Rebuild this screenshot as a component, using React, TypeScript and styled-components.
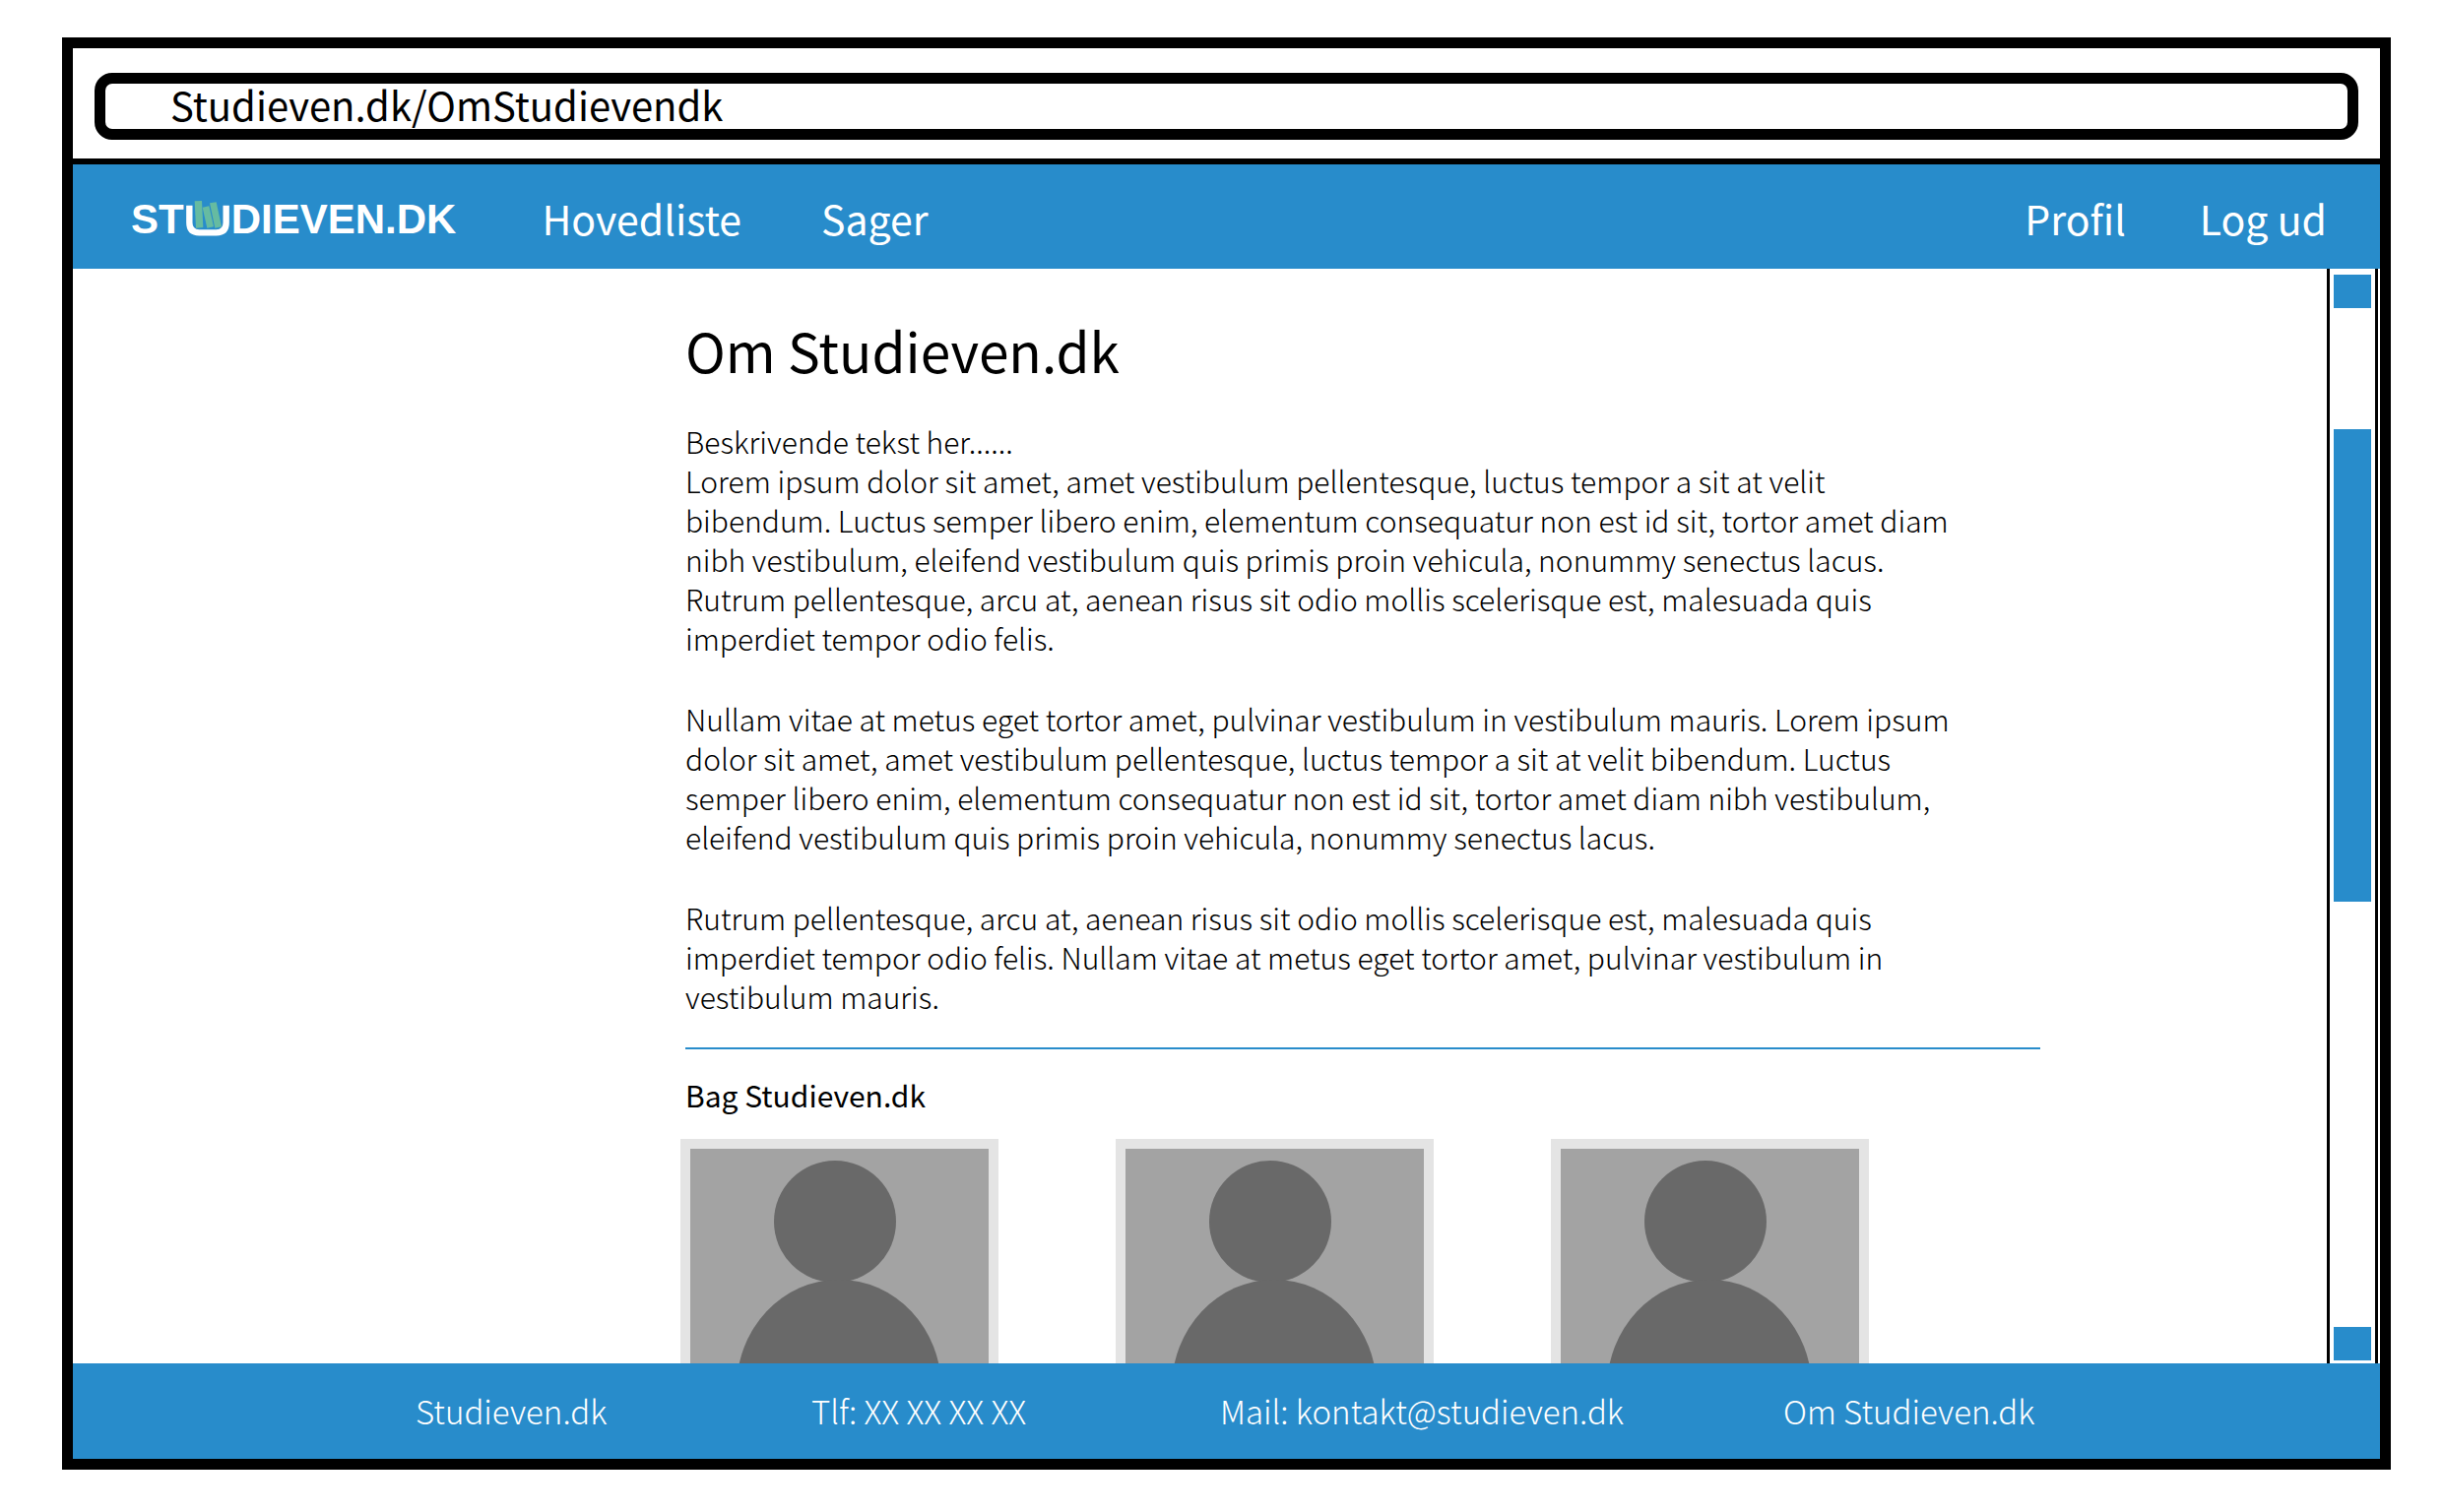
import React from "react";
import styled, { createGlobalStyle } from "styled-components";

const BLUE = "#288ccb";
const SANS = `"Noto Sans CJK JP", "Noto Sans CJK SC", "Open Sans", sans-serif`;

const GlobalStyle = createGlobalStyle`
  * { box-sizing: border-box; }
  html, body, #root { height: 100%; }
  body { margin: 0; background: #fff; color: #000; font-family: ${SANS}; }
  h1, h2, p, ul { margin: 0; padding: 0; font-weight: inherit; }
  a { color: inherit; text-decoration: none; }
`;

const Page = styled.div`
  height: 100vh;
  padding: 38px 53px 43px 63px;
`;

const BrowserWindow = styled.div`
  display: flex;
  flex-direction: column;
  height: 100%;
  border: 11px solid #000;
`;

const AddressRow = styled.div`
  flex: none;
  padding: 25px 22px 19px;
  border-bottom: 6px solid #000;
`;

const AddressInput = styled.input`
  display: block;
  width: 100%;
  height: 68px;
  padding: 0 66px 4px;
  border: 11px solid #000;
  border-radius: 18px;
  outline: none;
  background: #fff;
  color: #000;
  font: 400 40px/46px ${SANS};
`;

const Header = styled.header`
  flex: none;
  display: flex;
  align-items: center;
  justify-content: space-between;
  height: 106px;
  padding: 2px 54px 0 59px;
  background: ${BLUE};
  color: #fff;
`;

const HeaderGroup = styled.nav<{ $gap: number }>`
  display: flex;
  align-items: center;
  gap: ${(p) => p.$gap}px;
`;

const NavLink = styled.a`
  font-size: 41px;
  line-height: 60px;
`;

const Logo = styled.a`
  display: flex;
  align-items: center;
  margin-right: 6px;
  padding-top: 4px;
  font: 700 42px/48px "Liberation Sans", Arial, sans-serif;
`;

const LogoCup = styled.svg`
  width: 48px;
  height: 48px;
`;

const Viewport = styled.div`
  flex: 1;
  min-height: 0;
  display: flex;
  padding-right: 2px;
`;

const Scroller = styled.main`
  flex: 1;
  min-width: 0;
  overflow: hidden;
  padding-left: 622px;
`;

const Article = styled.article`
  max-width: 1376px;
`;

const Title = styled.h1`
  padding-top: 42px;
  font-size: 55px;
  line-height: 80px;
`;

const Copy = styled.div`
  display: flex;
  flex-direction: column;
  gap: 42px;
  max-width: 1304px;
  padding-top: 33px;
  font-size: 30px;
  line-height: 40px;
  font-weight: 300;
`;

const Rule = styled.hr`
  height: 2px;
  margin: 32px 0 0;
  border: 0;
  background: ${BLUE};
`;

const Subtitle = styled.h2`
  padding-top: 26px;
  font-size: 30px;
  line-height: 40px;
`;

const People = styled.ul`
  display: flex;
  gap: 119px;
  margin: 25px 0 0 -5px;
  list-style: none;
`;

const Portrait = styled.li`
  flex: none;
  width: 323px;
  border: 10px solid #e4e4e4;
  background: #a3a3a3;
`;

const Silhouette = styled.svg`
  display: block;
  width: 100%;
  fill: #696969;
`;

const ScrollTrack = styled.div`
  flex: none;
  display: flex;
  flex-direction: column;
  width: 52px;
  padding: 6px 4px 3px;
  border: solid #000;
  border-width: 0 3px;
`;

const ScrollButton = styled.button`
  flex: none;
  height: 34px;
  padding: 0;
  border: 0;
  background: ${BLUE};
`;

const ScrollLane = styled.div`
  flex: 1;
  display: flex;
  flex-direction: column;
`;

const Space = styled.div<{ $grow: number }>`
  flex: ${(p) => p.$grow} 0 0;
`;

const ScrollThumb = styled.div`
  flex: 479 0 0;
  background: ${BLUE};
`;

const Footer = styled.footer`
  flex: none;
  display: grid;
  grid-template-columns: 402fr 415fr 572fr 260fr;
  align-items: center;
  height: 97px;
  padding: 0 346px 2px 348px;
  background: ${BLUE};
  color: #fff;
  font-size: 33px;
  line-height: 50px;
  font-weight: 300;
  white-space: nowrap;
`;

const people = ["Person 1", "Person 2", "Person 3"];

const Person = ({ name }: { name: string }) => (
  <Portrait>
    <Silhouette viewBox="0 0 303 360" role="img" aria-label={name}>
      <circle cx="147" cy="74" r="62" />
      <ellipse cx="151" cy="243" rx="104" ry="110" />
    </Silhouette>
  </Portrait>
);

export default function App() {
  return (
    <>
      <GlobalStyle />
      <Page>
        <BrowserWindow>
          <AddressRow>
            <AddressInput aria-label="Adresse" defaultValue="Studieven.dk/OmStudievendk" />
          </AddressRow>
          <Header>
            <HeaderGroup $gap={81}>
              <Logo href="#" aria-label="Studieven.dk">
                ST
                <LogoCup viewBox="0 0 144 144" aria-hidden="true">
                  <path d="M16 29V82Q16 112 46 112H98Q128 112 128 82V29" fill="none" stroke="#fff" strokeWidth="19" />
                  <g fill="#66bba1">
                    <path d="M32 16L54 15L58 96L36 98Z" />
                    <path d="M56 35L76 31L90 94L70 98Z" />
                    <path d="M78 22L98 19L114 94L94 98Z" />
                  </g>
                </LogoCup>
                DIEVEN.DK
              </Logo>
              <NavLink href="#">Hovedliste</NavLink>
              <NavLink href="#">Sager</NavLink>
            </HeaderGroup>
            <HeaderGroup $gap={75}>
              <NavLink href="#">Profil</NavLink>
              <NavLink href="#">Log ud</NavLink>
            </HeaderGroup>
          </Header>
          <Viewport>
            <Scroller>
              <Article>
                <Title>Om Studieven.dk</Title>
                <Copy>
                  <div>
                    <p>Beskrivende tekst her......</p>
                    <p>
                      Lorem ipsum dolor sit amet, amet vestibulum pellentesque, luctus tempor a sit at velit
                      bibendum. Luctus semper libero enim, elementum consequatur non est id sit, tortor amet diam
                      nibh vestibulum, eleifend vestibulum quis primis proin vehicula, nonummy senectus lacus.
                      Rutrum pellentesque, arcu at, aenean risus sit odio mollis scelerisque est, malesuada quis
                      imperdiet tempor odio felis.
                    </p>
                  </div>
                  <p>
                    Nullam vitae at metus eget tortor amet, pulvinar vestibulum in vestibulum mauris. Lorem ipsum
                    dolor sit amet, amet vestibulum pellentesque, luctus tempor a sit at velit bibendum. Luctus
                    semper libero enim, elementum consequatur non est id sit, tortor amet diam nibh vestibulum,
                    eleifend vestibulum quis primis proin vehicula, nonummy senectus lacus.
                  </p>
                  <p>
                    Rutrum pellentesque, arcu at, aenean risus sit odio mollis scelerisque est, malesuada quis
                    imperdiet tempor odio felis. Nullam vitae at metus eget tortor amet, pulvinar vestibulum in
                    vestibulum mauris.
                  </p>
                </Copy>
                <Rule />
                <Subtitle>Bag Studieven.dk</Subtitle>
                <People>
                  {people.map((name) => (
                    <Person key={name} name={name} />
                  ))}
                </People>
              </Article>
            </Scroller>
            <ScrollTrack>
              <ScrollButton aria-label="Rul op" />
              <ScrollLane>
                <Space $grow={123} />
                <ScrollThumb />
                <Space $grow={432} />
              </ScrollLane>
              <ScrollButton aria-label="Rul ned" />
            </ScrollTrack>
          </Viewport>
          <Footer>
            <span>Studieven.dk</span>
            <span>Tlf: XX XX XX XX</span>
            <a href="#">Mail: kontakt@studieven.dk</a>
            <a href="#">Om Studieven.dk</a>
          </Footer>
        </BrowserWindow>
      </Page>
    </>
  );
}
